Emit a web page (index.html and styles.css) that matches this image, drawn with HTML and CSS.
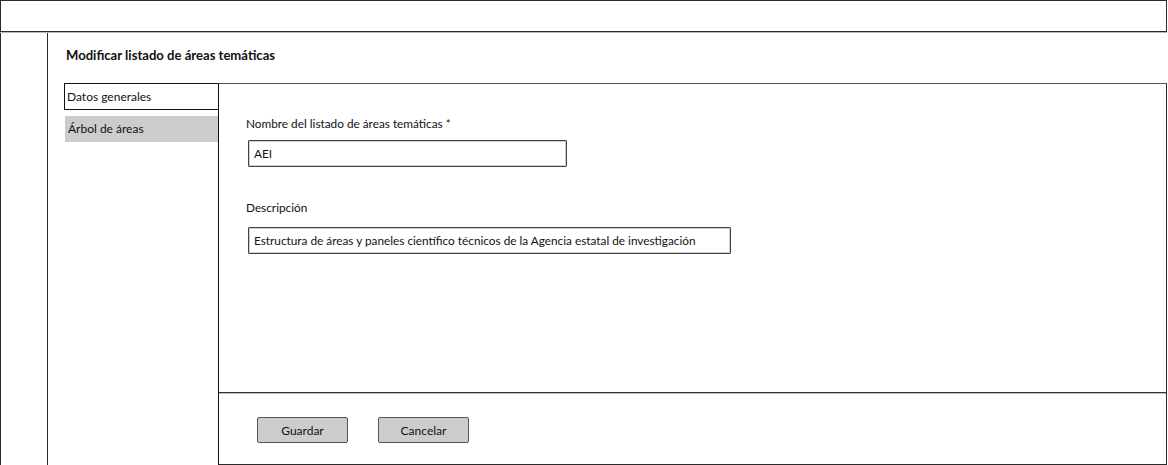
FILE: index.html
```html
<!DOCTYPE html>
<html lang="es">
<head>
<meta charset="utf-8">
<title>Modificar listado de áreas temáticas</title>
<link rel="stylesheet" href="styles.css">
</head>
<body>
<div class="topbar"></div>
<div class="layout">
  <aside class="sidebar"></aside>
  <main class="main">
    <h1 class="title">Modificar listado de áreas temáticas</h1>
    <div class="workspace">
      <nav class="tabs">
        <div class="tab tab-active">Datos generales</div>
        <div class="tab tab-inactive">Árbol de áreas</div>
      </nav>
      <section class="panel">
        <div class="panel-body">
          <div class="field">
            <label class="label">Nombre del listado de áreas temáticas *</label>
            <div class="input input-short">AEI</div>
          </div>
          <div class="field field-desc">
            <label class="label">Descripción</label>
            <div class="input input-long">Estructura de áreas y paneles científico técnicos de la Agencia estatal de investigación</div>
          </div>
        </div>
        <div class="panel-footer">
          <button class="btn">Guardar</button>
          <button class="btn">Cancelar</button>
        </div>
      </section>
    </div>
  </main>
</div>
</body>
</html>
```

FILE: styles.css
```css
* { box-sizing: border-box; }
html, body { margin: 0; padding: 0; }
body {
  width: 1168px;
  height: 465px;
  background: #fff;
  font-family: Lato, "Liberation Sans", sans-serif;
  color: #111;
  overflow: hidden;
}
.topbar {
  width: 1167px;
  height: 32px;
  border: 1px solid #2b2b2b;
  box-shadow: 0 1px 0 #b8b8b8;
}
.layout {
  display: flex;
  height: 433px;
  width: 1167px;
}
.sidebar {
  width: 48px;
  border-left: 1px solid #2b2b2b;
  border-right: 1px solid #2b2b2b;
  margin-top: 1px;
}
.main {
  flex: 1;
  display: flex;
  flex-direction: column;
  padding-left: 16px;
}
.title {
  margin: 15px 0 0 2px;
  font-size: 13.1px;
  font-weight: 700;
  line-height: 16px;
  height: 36px;
}
.workspace {
  flex: 1;
  display: flex;
}
.tabs {
  width: 154px;
  display: flex;
  flex-direction: column;
  gap: 5px;
}
.tab {
  font-size: 12px;
  padding-left: 2px;
}
.tab-active {
  height: 27px;
  line-height: 25px;
  border: 1.5px solid #111;
  border-right: none;
  background: #fff;
}
.tab-inactive {
  height: 26px;
  background: #cccccc;
  margin-top: 1px;
  margin-left: 1px;
  padding-left: 3px;
  line-height: 26px;
}
.panel {
  flex: 1;
  display: flex;
  flex-direction: column;
  border: 1px solid #2b2b2b;
  border-left: 1.5px solid #111;
  border-top-color: #555;
}
.panel-body {
  flex: 1;
  padding: 33px 0 0 27px;
}
.field {
  display: flex;
  flex-direction: column;
}
.field-desc {
  margin-top: 34px;
}
.label {
  font-size: 11.8px;
  line-height: 14px;
  height: 14px;
}
.input {
  margin-top: 9px;
  margin-left: 2px;
  height: 27px;
  border: 1px solid #444;
  border-radius: 1px;
  box-shadow: inset 0 0 0 1px #cfcfcf;
  font-size: 11.8px;
  line-height: 25px;
  padding-left: 5px;
}
.field-desc .input { margin-top: 12px; }
.input-short { width: 319px; }
.input-long { width: 483px; }
.panel-footer {
  height: 72px;
  border-top: 1.5px solid #333;
  box-shadow: inset 0 1px 0 #bdbdbd;
  display: flex;
  align-items: flex-start;
  padding: 24px 0 0 38px;
  gap: 30px;
}
.btn {
  width: 91px;
  height: 26px;
  background: #cccccc;
  border: 1px solid #555;
  border-radius: 2px;
  font-family: Lato, "Liberation Sans", sans-serif;
  font-size: 12px;
  color: #111;
  padding: 0;
}
```
